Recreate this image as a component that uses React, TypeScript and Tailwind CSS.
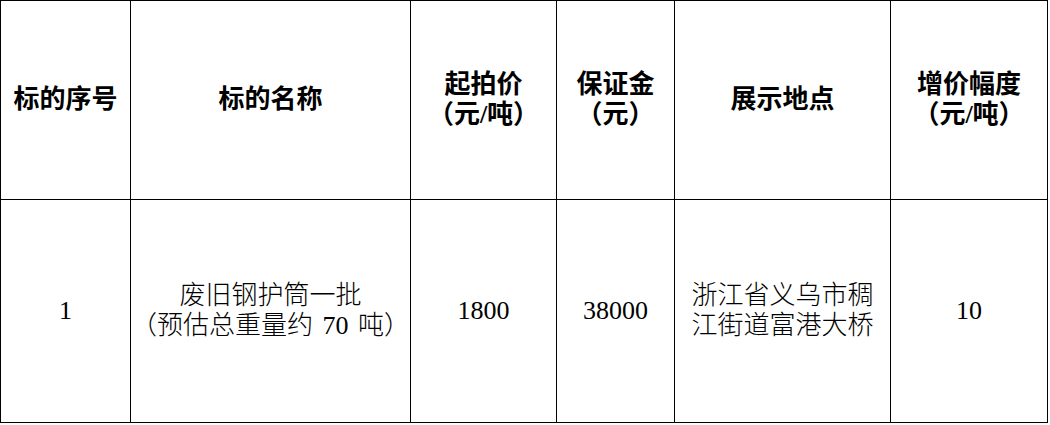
import React from "react";

type Line = React.ReactNode;

const headers: Line[][] = [
  ["标的序号"],
  ["标的名称"],
  ["起拍价", "（元/吨）"],
  ["保证金", "（元）"],
  ["展示地点"],
  ["增价幅度", "（元/吨）"],
];

const row: Line[][] = [
  ["1"],
  [
    "废旧钢护筒一批",
    <>
      （预估总重量约 <span className="mx-[3px]">70</span> 吨）
    </>,
  ],
  ["1800"],
  ["38000"],
  ["浙江省义乌市稠", "江街道富港大桥"],
  ["10"],
];

function Cell({ lines, bold }: { lines: Line[]; bold?: boolean }) {
  return (
    <div
      className={`flex flex-col items-center justify-center border-r border-b border-black text-center text-[26px] leading-[30px] text-black ${
        bold ? "font-semibold" : "font-light"
      }`}
    >
      {lines.map((l, i) => (
        <span key={i} className="whitespace-pre">
          {l}
        </span>
      ))}
    </div>
  );
}

export default function App() {
  return (
    <div
      className="min-h-screen bg-white"
      style={{ fontFamily: '"Liberation Serif", "Noto Sans CJK SC", serif' }}
    >
      <div className="grid w-[1048px] grid-cols-[130px_280px_146px_118px_216px_157px] grid-rows-[199px_223px] border-l border-t border-black">
        {headers.map((h, i) => (
          <Cell key={`h${i}`} lines={h} bold />
        ))}
        {row.map((c, i) => (
          <Cell key={`r${i}`} lines={c} />
        ))}
      </div>
    </div>
  );
}
